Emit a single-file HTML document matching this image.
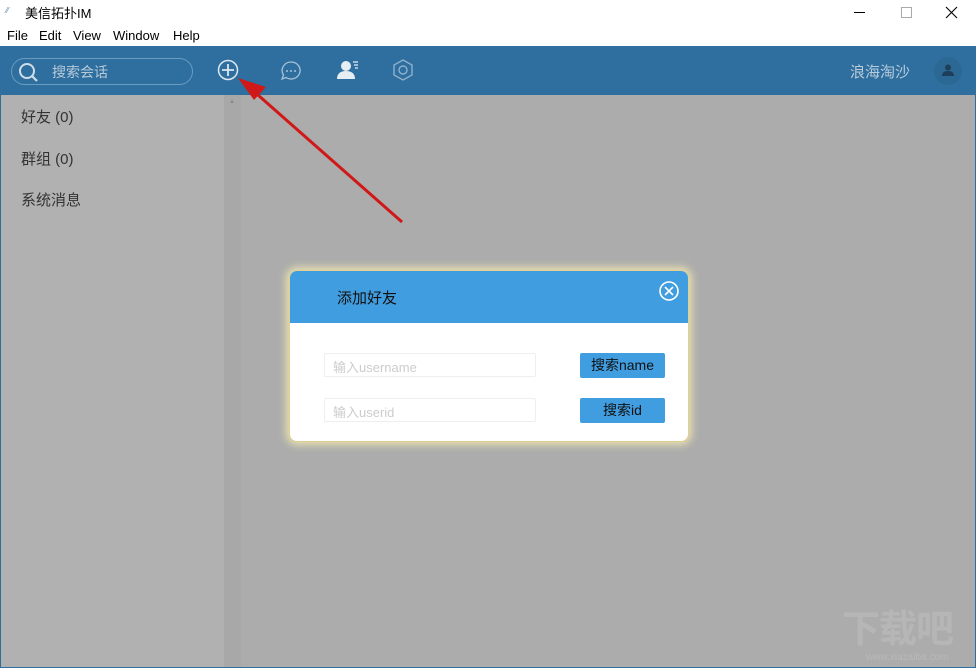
<!DOCTYPE html>
<html><head><meta charset="utf-8"><style>
*{margin:0;padding:0;box-sizing:border-box}
body{width:976px;height:668px;overflow:hidden;background:#fff;font-family:"Liberation Sans","Noto Sans CJK SC",sans-serif;position:relative}
.abs{position:absolute}
.title{top:0;left:0;width:976px;height:26px;font-size:13px;color:#000}
.menu{top:26px;left:0;width:976px;height:20px;font-size:13px}
.menu span{position:absolute;top:2px}
.hdr{top:46px;left:0;width:976px;height:49px;background:#2e6f9f}
.side{top:95px;left:1px;width:223px;height:572px;background:#b1b1b1}
.scr{top:95px;left:224px;width:17px;height:572px;background:#a8a8a8}
.main{top:95px;left:241px;width:734px;height:572px;background:#acacac}
.side div{position:absolute;left:20px;font-size:15px;color:#333}
.dlg{top:270px;left:289px;width:400px;height:172px;background:#fff;border-radius:8px;box-shadow:0 0 8px 3px #e8e0b0;overflow:hidden;border:1px solid #e0cf90}
.dh{height:52px;background:#409ddf;position:relative}
.inp{position:absolute;left:34px;width:212px;height:24px;border:1px solid #eee;border-radius:2px;font-size:13px;color:#ccc;padding:3px 8px}
.btn{position:absolute;left:290px;width:85px;height:25px;background:#409ddf;border-radius:2px;font-size:14px;color:#111;text-align:center;line-height:24px}
</style></head><body>
<div class="abs title"><span class="abs" style="left:6px;top:6px;font-size:8px;color:#58a">⁄⁄</span><span class="abs" style="left:25px;top:3px">美信拓扑IM</span>
<span class="abs" style="left:854px;top:12px;width:11px;height:1px;background:#000"></span>
<span class="abs" style="left:901px;top:7px;width:11px;height:11px;border:1px solid #aaa"></span>
<svg class="abs" style="left:945px;top:6px" width="13" height="13"><path d="M1 1l11 11M12 1L1 12" stroke="#000" stroke-width="1.1"/></svg></div>
<div class="abs menu"><span style="left:7px">File</span><span style="left:39px">Edit</span><span style="left:73px">View</span><span style="left:113px">Window</span><span style="left:173px">Help</span></div>
<div class="abs hdr">
<div class="abs" style="left:11px;top:12px;width:182px;height:27px;border:1px solid #6a9cc2;border-radius:14px"></div>
<svg class="abs" style="left:18px;top:16px" width="22" height="22"><circle cx="9" cy="9" r="7" fill="none" stroke="#cfdde8" stroke-width="2"/><line x1="14" y1="14" x2="19" y2="19" stroke="#cfdde8" stroke-width="2.2"/></svg>
<span class="abs" style="left:52px;top:16px;font-size:14px;color:#b8cad8">搜索会话</span>
<svg class="abs" style="left:217px;top:13px" width="24" height="24"><circle cx="11" cy="11" r="9.5" fill="none" stroke="#dde7ef" stroke-width="1.5"/><path d="M11 5v12M5 11h12" stroke="#dde7ef" stroke-width="1.8"/></svg>
<svg class="abs" style="left:280px;top:14px" width="22" height="22"><path d="M11 2a9 8.5 0 1 1-5 15.5L2 19l1.5-4A9 8.5 0 0 1 11 2z" fill="none" stroke="#a8c2d6" stroke-width="1.3"/><circle cx="7" cy="11" r="1" fill="#a8c2d6"/><circle cx="11" cy="11" r="1" fill="#a8c2d6"/><circle cx="15" cy="11" r="1" fill="#a8c2d6"/></svg>
<svg class="abs" style="left:337px;top:14px" width="22" height="20"><circle cx="9" cy="6" r="5" fill="#e6edf3"/><path d="M0 19c0-6 4-8 9-8s9 2 9 8z" fill="#e6edf3"/><path d="M16 2h5M17 5h4M18 8h3" stroke="#e6edf3" stroke-width="1.2"/></svg>
<svg class="abs" style="left:392px;top:13px" width="22" height="22"><path d="M11 1l9 5v10l-9 5-9-5V6z" fill="none" stroke="#8fb1cb" stroke-width="1.4"/><circle cx="11" cy="11" r="4" fill="none" stroke="#8fb1cb" stroke-width="1.4"/></svg>
<span class="abs" style="left:850px;top:15px;font-size:15px;color:#b9cbd9">浪海淘沙</span>
<div class="abs" style="left:934px;top:11px;width:28px;height:28px;border-radius:50%;background:#2b6894"></div>
<svg class="abs" style="left:942px;top:18px" width="12" height="12"><circle cx="6" cy="3.5" r="3" fill="#1d3f5a"/><path d="M0 12c0-4 3-5 6-5s6 1 6 5z" fill="#1d3f5a"/></svg>
</div>
<div class="abs" style="left:0;top:95px;width:1px;height:573px;background:#2e6f9f"></div>
<div class="abs" style="left:975px;top:95px;width:1px;height:573px;background:#2e6f9f"></div>
<div class="abs" style="left:0;top:667px;width:976px;height:1px;background:#2e6f9f"></div>
<div class="abs side"><div style="top:11px">好友 (0)</div><div style="top:53px">群组 (0)</div><div style="top:94px">系统消息</div></div>
<div class="abs scr"><span class="abs" style="left:5px;top:4px;font-size:6px;color:#888">▲</span></div>
<div class="abs main"></div>
<div class="abs" style="left:842px;top:608px;font-size:38px;font-weight:bold;color:#b6b6b6;letter-spacing:-1px;line-height:44px">下载吧</div>
<div class="abs" style="left:866px;top:652px;font-size:10px;color:#b9b9b9">www.xiazaiba.com</div>
<svg class="abs" style="left:230px;top:70px" width="180" height="160"><line x1="172" y1="152" x2="20" y2="18" stroke="#d01818" stroke-width="3"/><path d="M8 8l28 9-12 13z" fill="#d01818"/></svg>
<div class="abs dlg">
<div class="dh"><span class="abs" style="left:47px;top:16px;font-size:15px;color:#111">添加好友</span>
<svg class="abs" style="left:368px;top:9px" width="22" height="22"><circle cx="11" cy="11" r="9" fill="none" stroke="#fff" stroke-width="1.6"/><path d="M7 7l8 8M15 7l-8 8" stroke="#fff" stroke-width="1.6"/></svg></div>
<div class="inp" style="top:82px">输入username</div>
<div class="btn" style="top:82px">搜索name</div>
<div class="inp" style="top:127px">输入userid</div>
<div class="btn" style="top:127px">搜索id</div>
</div>
</body></html>
